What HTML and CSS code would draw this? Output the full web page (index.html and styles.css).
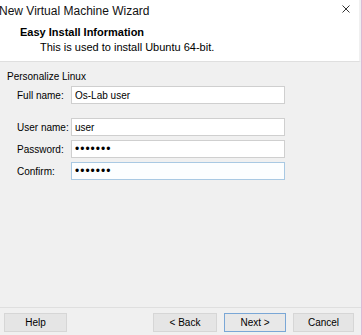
FILE: index.html
```html
<!DOCTYPE html>
<html lang="en">
<head>
    <meta charset="UTF-8">
    <meta name="viewport" content="width=device-width, initial-scale=1.0">
    <title>New Virtual Machine Wizard</title>
    <link rel="stylesheet" href="styles.css">
</head>
<body>

    <div class="window">
        <div class="titlebar">
            <span class="title">New Virtual Machine Wizard</span>
            <span class="close">
                <svg width="8" height="8" viewBox="0 0 8 8">
                    <path d="M0.5 0.5 L7.5 7.5 M7.5 0.5 L0.5 7.5" stroke="#333" stroke-width="1" fill="none"/>
                </svg>
            </span>
        </div>

        <div class="header">
            <div class="header-title">Easy Install Information</div>
            <div class="header-sub">This is used to install Ubuntu 64-bit.</div>
        </div>

        <div class="content">
            <div class="group-title">Personalize Linux</div>

            <div class="row">
                <label for="fullname">Full name:</label>
                <input type="text" id="fullname" class="field" value="Os-Lab user">
            </div>

            <div class="row row-gap">
                <label for="username">User name:</label>
                <input type="text" id="username" class="field" value="user">
            </div>

            <div class="row">
                <label for="password">Password:</label>
                <input type="password" id="password" class="field" value="1234567">
            </div>

            <div class="row">
                <label for="confirm">Confirm:</label>
                <input type="password" id="confirm" class="field focused" value="1234567">
            </div>
        </div>

        <div class="footer">
            <button class="button help">Help</button>
            <div class="nav">
                <button class="button back">&lt; Back</button>
                <button class="button default">Next &gt;</button>
                <button class="button cancel">Cancel</button>
            </div>
        </div>
    </div>

</body>
</html>
```

FILE: styles.css
```css
body {
    margin: 0;
    font-family: "Liberation Sans", Arial, sans-serif;
    font-size: 10px;
    color: #000;
    background-color: #f0f0f0;
}

.window {
    width: 362px;
    height: 335px;
    box-sizing: border-box;
    border-right: 1px solid #dcb9d6;
    display: flex;
    flex-direction: column;
    background-color: #f0f0f0;
    overflow: hidden;
}

.titlebar {
    height: 22px;
    flex-shrink: 0;
    background-color: #fff;
    display: flex;
    align-items: center;
    justify-content: space-between;
    padding-right: 9px;
    border-right: 2px solid #f0f0f0;
}

.title {
    margin-left: -1px;
    font-size: 12px;
    line-height: 16px;
    color: #111;
}

.close {
    display: flex;
    margin-top: -5px;
}

.header {
    height: 40px;
    flex-shrink: 0;
    background-color: #fff;
    border-bottom: 1px solid #dfdfdf;
    border-right: 2px solid #f0f0f0;
    padding-top: 3px;
    box-sizing: border-box;
    font-size: 11px;
}

.header-title {
    font-weight: bold;
    margin-left: 20px;
    line-height: 15px;
}

.header-sub {
    margin-left: 40px;
    line-height: 15px;
}

.content {
    flex: 1;
    padding: 7px 0 0 7px;
}

.group-title {
    line-height: 16px;
    margin-bottom: 1px;
}

.row {
    display: flex;
    align-items: center;
    height: 18px;
    margin-bottom: 4px;
}

.row-gap {
    margin-top: 14px;
}

.row label {
    flex: 0 0 54px;
    margin-left: 10px;
    white-space: nowrap;
}

.field {
    width: 214px;
    height: 18px;
    box-sizing: border-box;
    border: 1px solid #cfcfcf;
    background-color: #fff;
    padding: 0 3px;
    font-family: inherit;
    font-size: 10px;
    outline: none;
}

.field[type="password"] {
    font-size: 12px;
    letter-spacing: 1px;
}

.field.focused {
    border-color: #a9c9e3;
    background-color: #fcfeff;
}

.footer {
    height: 28px;
    flex-shrink: 0;
    box-sizing: border-box;
    border-top: 1px solid #dfdfdf;
    display: flex;
    justify-content: space-between;
    align-items: flex-start;
    padding: 5px 7px 0 4px;
}

.nav {
    display: flex;
    gap: 7px;
}

.button {
    height: 19px;
    box-sizing: border-box;
    border: 1px solid #d6d6d6;
    background-color: #e5e5e5;
    font-family: inherit;
    font-size: 10px;
    padding: 0;
    color: #000;
}

.button.help {
    width: 63px;
}

.button.back {
    width: 64px;
}

.button.default {
    width: 62px;
    border-color: #7aa7d6;
    background-color: #e8e8e8;
}

.button.cancel {
    width: 61px;
}
```
